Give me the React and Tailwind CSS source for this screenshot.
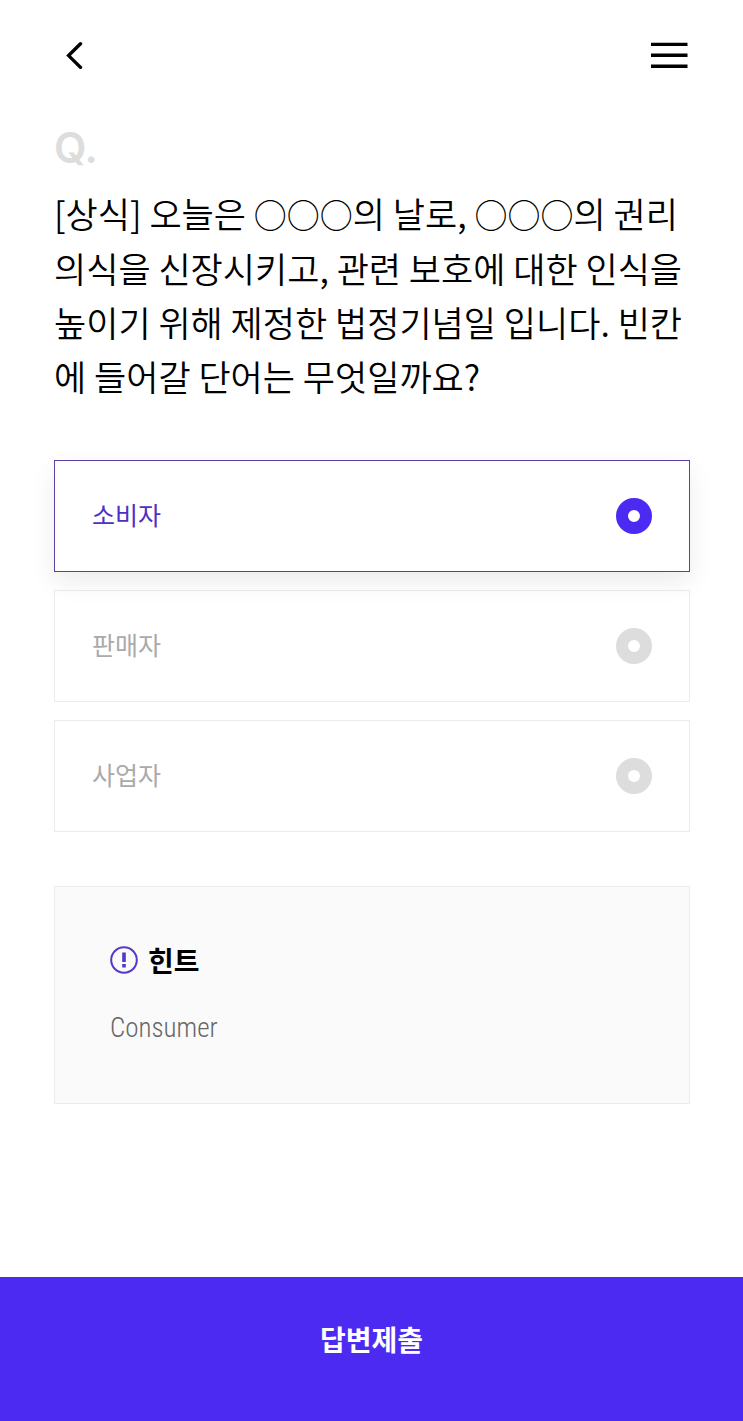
import { useState } from 'react';

const options = ['소비자', '판매자', '사업자'];

const Blank = () => <span className="text-[33px]">○○○</span>;

const App = () => {
  const [selected, setSelected] = useState('소비자');

  const getOptionClass = (option) =>
    selected === option
      ? "relative z-10 flex items-center justify-between h-28 px-[37px] border border-[#5b3fa6] bg-white text-[#4f2fc4] shadow-[0_10px_24px_rgba(0,0,0,0.08)] cursor-pointer"
      : "flex items-center justify-between h-28 px-[37px] border border-[#ebebeb] text-[#aaaaaa] cursor-pointer";

  return (
    <div className="min-h-screen flex flex-col bg-white text-black font-['Noto_Sans_CJK_KR',sans-serif]">
      {/* Top bar */}
      <header className="flex items-center justify-between px-[54px] pt-[31px]">
        <button type="button" aria-label="뒤로" className="flex items-center justify-center w-10 h-12 cursor-pointer">
          <svg width="18" height="28" viewBox="0 0 18 28" fill="none" stroke="currentColor" strokeWidth="3.4" strokeLinecap="round" strokeLinejoin="miter">
            <path d="M15.5 2.8 3.6 14.6l11.9 11.8" />
          </svg>
        </button>
        <button type="button" aria-label="메뉴" className="flex items-center justify-center h-12 cursor-pointer">
          <svg width="38" height="28" viewBox="0 0 38 28" fill="none" stroke="currentColor" strokeWidth="3.4">
            <path d="M0 3.4h36.5M0 14.2h36.5M0 25.2h36.5" />
          </svg>
        </button>
      </header>

      <main className="pl-[54px] pr-[53px] pt-[45px] pb-12">
        {/* Question */}
        <p className="h-[54px] font-['Inter',sans-serif] font-semibold text-[42px] leading-[48px] text-[#dddddd]">Q.</p>
        <h1 className="mt-2 text-[35px] leading-[54px] font-[350]">
          <span className="block">[상식] 오늘은 <Blank />의 날로, <Blank />의 권리</span>
          <span className="block">의식을 신장시키고, 관련 보호에 대한 인식을</span>
          <span className="block">높이기 위해 제정한 법정기념일 입니다. 빈칸</span>
          <span className="block">에 들어갈 단어는 무엇일까요?</span>
        </h1>

        {/* Answers */}
        <div role="radiogroup" aria-label="답변" className="mt-[57px] flex flex-col gap-[18px]">
          {options.map((option) => (
            <label key={option} className={getOptionClass(option)}>
              <span className="pb-1 text-[25px] leading-8">{option}</span>
              <input
                type="radio"
                name="answer"
                value={option}
                checked={selected === option}
                onChange={() => setSelected(option)}
                className="appearance-none size-9 rounded-full border-[12px] border-[#dddddd] bg-white checked:border-[#4c2af2] cursor-pointer"
              />
            </label>
          ))}
        </div>

        {/* Hint */}
        <section className="mt-[54px] px-[55px] pt-[53px] pb-[55px] border border-[#ebebeb] bg-[#fafafa]">
          <h2 className="flex items-center gap-[10px] text-[28px] leading-10 font-bold">
            <svg width="28" height="28" viewBox="0 0 28 28" fill="none" stroke="#5836c8" strokeWidth="2">
              <circle cx="14" cy="14" r="12.8" />
              <path d="M14 6.5v9.5M14 18v3.5" strokeWidth="3.6" />
            </svg>
            힌트
          </h2>
          <p className="mt-7 font-['Roboto_Condensed','Liberation_Sans_Narrow','Roboto',sans-serif] font-light text-[27px] leading-10 text-[#666666]">Consumer</p>
        </section>
      </main>

      {/* Submit */}
      <button type="button" className="mt-auto w-full h-36 pb-5 bg-[#4c2af2] text-white text-[28px] font-bold cursor-pointer">
        답변제출
      </button>
    </div>
  );
};

export default App;
